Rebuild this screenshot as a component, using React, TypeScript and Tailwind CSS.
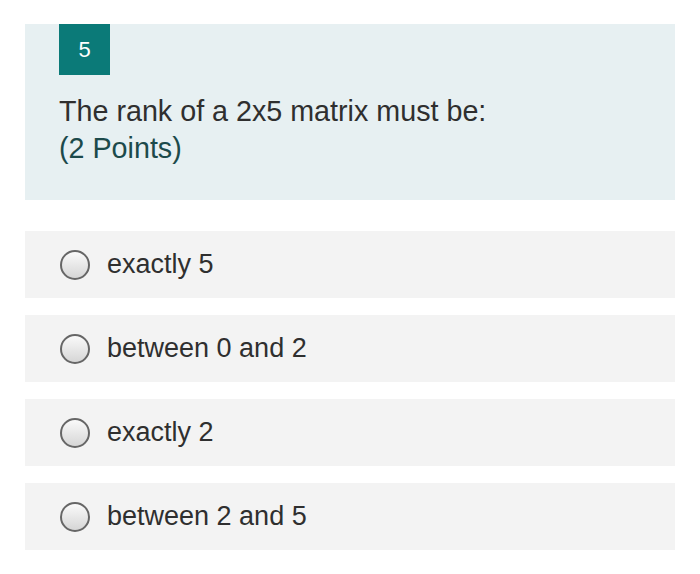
const options = ["exactly 5", "between 0 and 2", "exactly 2", "between 2 and 5"]

const Radio = () => (
    <div className="w-[30px] h-[30px] rounded-full border-[2px] border-[#666666] bg-gradient-to-b from-[#fafafa] to-[#d6d6d6] shrink-0"></div>
)

export default function App() {
    return (
        <div className="w-[700px] h-[574px] bg-white pt-[24px] px-[25px] font-['Liberation_Sans',Arial,sans-serif]">
            {/* Question header */}
            <div className="bg-[#e7f0f2] h-[176px] pl-[34px]">
                <div className="w-[51px] h-[51px] bg-[#0b7a78] flex items-center justify-center text-white text-[22px]">
                    5
                </div>
                <div className="mt-[18px] text-[28.7px] leading-[37px] text-[#2f2f2f]">
                    The rank of a 2x5 matrix must be:
                </div>
                <div className="text-[28.7px] leading-[37px] text-[#1c4a4b]">(2 Points)</div>
            </div>

            {/* Options */}
            <div className="mt-[31px] flex flex-col gap-[17px]">
                {options.map((opt) => (
                    <div key={opt} className="h-[67px] bg-[#f3f3f3] flex items-center pl-[35px] gap-[17px]">
                        <Radio />
                        <span className="text-[27px] text-[#2f2f2f]">{opt}</span>
                    </div>
                ))}
            </div>
        </div>
    )
}
